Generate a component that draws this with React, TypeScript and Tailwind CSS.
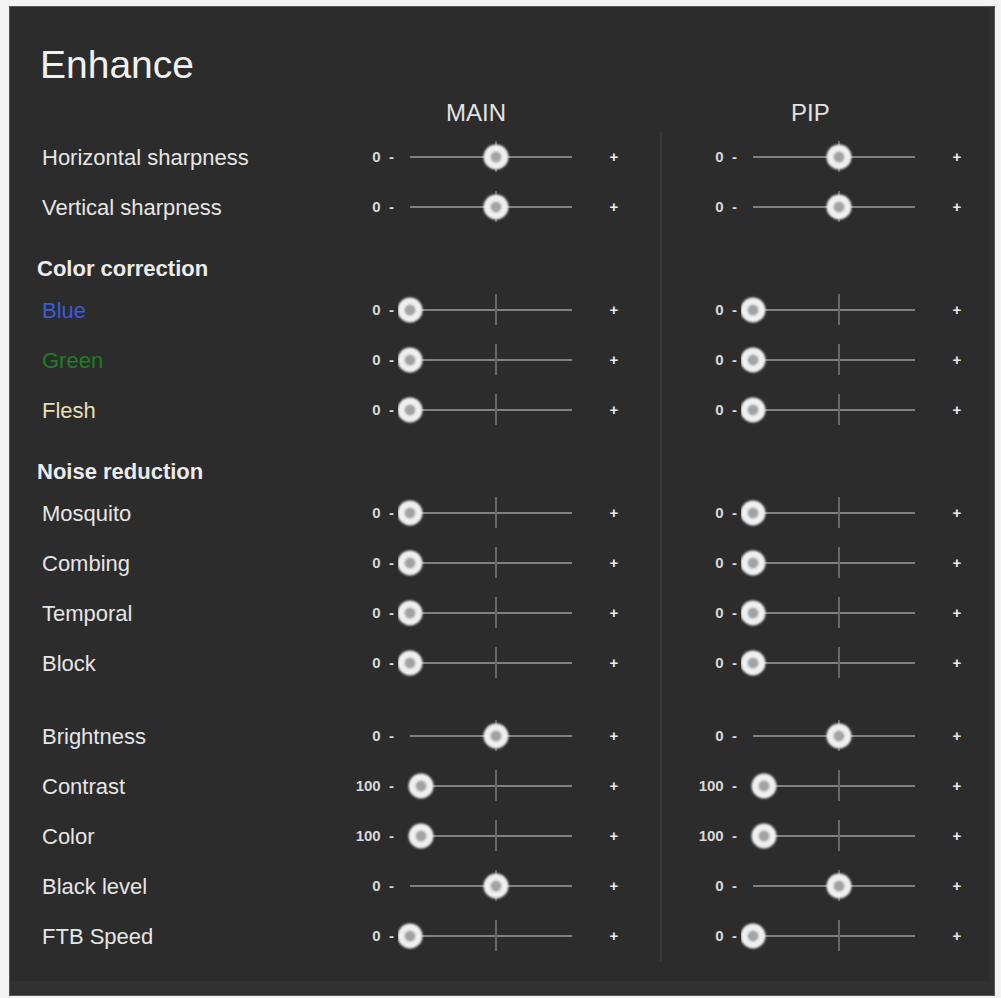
import { useId } from "react";

type Pos = "mid" | "left" | "left100";

type Row =
  | { kind: "slider"; label: string; color: string; pos: Pos; value: string }
  | { kind: "header"; label: string }
  | { kind: "gap" };

const rows: Row[] = [
  { kind: "slider", label: "Horizontal sharpness", color: "text-[#e6e6e6]", pos: "mid", value: "0" },
  { kind: "slider", label: "Vertical sharpness", color: "text-[#e6e6e6]", pos: "mid", value: "0" },
  { kind: "header", label: "Color correction" },
  { kind: "slider", label: "Blue", color: "text-[#3a5bd6]", pos: "left", value: "0" },
  { kind: "slider", label: "Green", color: "text-[#1f7d24]", pos: "left", value: "0" },
  { kind: "slider", label: "Flesh", color: "text-[#eadfb8]", pos: "left", value: "0" },
  { kind: "header", label: "Noise reduction" },
  { kind: "slider", label: "Mosquito", color: "text-[#e6e6e6]", pos: "left", value: "0" },
  { kind: "slider", label: "Combing", color: "text-[#e6e6e6]", pos: "left", value: "0" },
  { kind: "slider", label: "Temporal", color: "text-[#e6e6e6]", pos: "left", value: "0" },
  { kind: "slider", label: "Block", color: "text-[#e6e6e6]", pos: "left", value: "0" },
  { kind: "gap" },
  { kind: "slider", label: "Brightness", color: "text-[#e6e6e6]", pos: "mid", value: "0" },
  { kind: "slider", label: "Contrast", color: "text-[#e6e6e6]", pos: "left100", value: "100" },
  { kind: "slider", label: "Color", color: "text-[#e6e6e6]", pos: "left100", value: "100" },
  { kind: "slider", label: "Black level", color: "text-[#e6e6e6]", pos: "mid", value: "0" },
  { kind: "slider", label: "FTB Speed", color: "text-[#e6e6e6]", pos: "left", value: "0" },
];

const knobX: Record<Pos, number> = { mid: 98, left: 12, left100: 23 };

function Track({ pos }: { pos: Pos }) {
  const id = useId().replace(/:/g, "");
  const cx = knobX[pos];
  return (
    <svg width="186" height="40" viewBox="0 0 186 40" className="ml-[4px] shrink-0">
      <defs>
        <filter id={`s${id}`} x="-50%" y="-50%" width="200%" height="200%">
          <feGaussianBlur stdDeviation="1.1" />
        </filter>
      </defs>
      <line x1="12" y1="20" x2="174" y2="20" stroke="#808080" strokeWidth="2" />
      <line x1="98" y1="4" x2="98" y2="35" stroke="#686868" strokeWidth="2" />
      <g filter={`url(#s${id})`}>
        <circle cx={cx} cy="20" r="12.5" fill="#f0f0f0" />
        <circle cx={cx} cy="20" r="5.5" fill="#a2a2a2" />
      </g>
    </svg>
  );
}

function SliderCell({ pos, value }: { pos: Pos; value: string }) {
  return (
    <div className="flex items-center">
      <span className="w-[44px] text-right text-[15px] font-bold text-[#d9d9d9] whitespace-pre">{value + "  -"}</span>
      <Track pos={pos} />
      <span className="ml-[20px] w-[20px] text-center text-[15px] font-bold text-[#ececec]">+</span>
    </div>
  );
}

export default function App() {
  return (
    <div className="w-[1001px] h-[998px] bg-[#f3f3f3] pt-[6px] pl-[9px] font-['Liberation_Sans',Arial,sans-serif]">
      <div className="w-[986px] h-[990px] bg-[#2c2c2c] border border-[#555555] shadow-[inset_-5px_-14px_0_#313131]">
        <h1 className="mt-[38px] pl-[30px] text-[39px] leading-[39px] text-[#f2f2f2]">Enhance</h1>

        <div className="grid grid-cols-[340px_310px_1fr] mt-[17px] h-[24px] text-[24px] leading-[24px] text-[#e2e2e2]">
          <div />
          <div className="pl-[96px]">MAIN</div>
          <div className="pl-[131px]">PIP</div>
        </div>

        <div className="mt-[7px]">
          {rows.map((row, i) => {
            if (row.kind === "gap") {
              return (
                <div key={i} className="grid grid-cols-[340px_310px_1fr] h-[23px]">
                  <div />
                  <div />
                  <div className="border-l-2 border-[#3a3a3a]" />
                </div>
              );
            }
            if (row.kind === "header") {
              return (
                <div key={i} className="grid grid-cols-[340px_310px_1fr] h-[53px]">
                  <div className="flex items-center pt-[20px] pl-[27px] text-[22px] font-bold text-[#ececec]">
                    {row.label}
                  </div>
                  <div />
                  <div className="border-l-2 border-[#3a3a3a]" />
                </div>
              );
            }
            return (
              <div key={i} className="grid grid-cols-[340px_310px_1fr] h-[50px]">
                <div className={`flex items-center pt-[1px] pl-[32px] text-[22px] ${row.color}`}>{row.label}</div>
                <div className="flex items-center">
                  <SliderCell pos={row.pos} value={row.value} />
                </div>
                <div className="flex items-center border-l-2 border-[#3a3a3a] pl-[31px]">
                  <SliderCell pos={row.pos} value={row.value} />
                </div>
              </div>
            );
          })}
        </div>
      </div>
    </div>
  );
}
